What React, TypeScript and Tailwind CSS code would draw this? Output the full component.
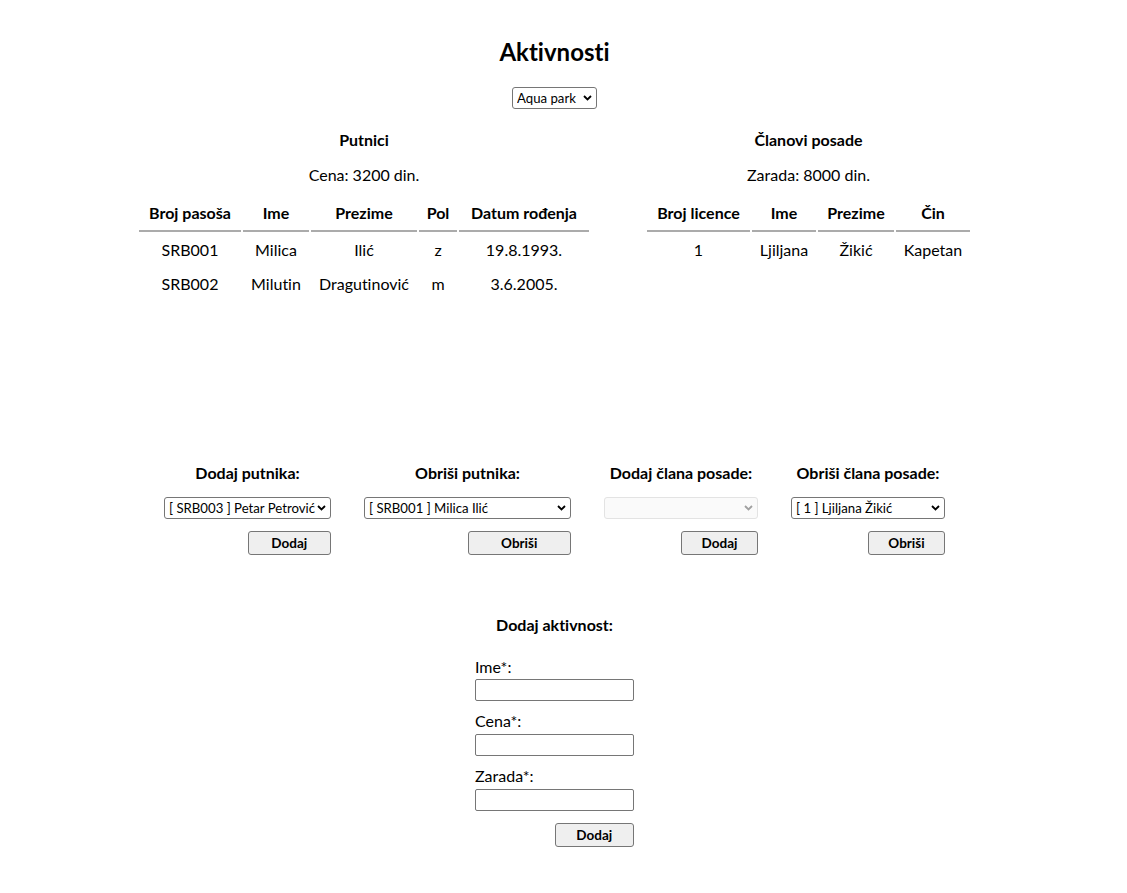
import React from 'react';

const font = { fontFamily: 'Lato, "Noto Sans", Arial, sans-serif' };

const Chevron: React.FC<{ disabled?: boolean }> = ({ disabled }) => (
  <svg
    className="pointer-events-none absolute right-[5px] top-1/2 -translate-y-1/2"
    width="9"
    height="6"
    viewBox="0 0 9 6"
  >
    <path
      d="M1 1 L4.5 4.5 L8 1"
      fill="none"
      stroke={disabled ? '#a0a0a0' : '#000'}
      strokeWidth="1.8"
    />
  </svg>
);

interface SelectProps {
  value?: string;
  className?: string;
  disabled?: boolean;
}

const Select: React.FC<SelectProps> = ({ value = '', className = '', disabled }) => (
  <div className={`relative ${className}`}>
    <select
      disabled={disabled}
      defaultValue={value}
      className={`block h-[22px] w-full appearance-none rounded-[3px] border pl-[4px] pr-[14px] text-[13.2px] leading-[20px] ${
        disabled ? 'border-[#e3e3e3] bg-[#fafafa]' : 'border-[#767676] bg-white text-black'
      }`}
    >
      <option value={value}>{value}</option>
    </select>
    <Chevron disabled={disabled} />
  </div>
);

const Button: React.FC<{ label: string; className?: string }> = ({ label, className = '' }) => (
  <button
    className={`h-[24px] rounded-[3px] border border-[#767676] bg-[#efefef] text-[13.5px] font-bold text-black ${className}`}
  >
    {label}
  </button>
);

const Th: React.FC<{ w: string; children: React.ReactNode }> = ({ w, children }) => (
  <th className={`${w} whitespace-nowrap border-b-2 border-[#ababab] px-0 py-[6px] text-center text-[16px] font-bold leading-[22px]`}>
    {children}
  </th>
);

const Td: React.FC<{ children: React.ReactNode }> = ({ children }) => (
  <td className="py-[5px] text-center text-[16px] leading-[22px]">{children}</td>
);

const passengers = [
  ['SRB001', 'Milica', 'Ilić', 'z', '19.8.1993.'],
  ['SRB002', 'Milutin', 'Dragutinović', 'm', '3.6.2005.'],
];

const FormColumn: React.FC<{ title: string; value: string; width: string; btn: string; disabled?: boolean }> = ({
  title,
  value,
  width,
  btn,
  disabled,
}) => (
  <div className={`flex flex-col ${width}`}>
    <h4 className="whitespace-nowrap text-center text-[16px] font-bold leading-[22px]">{title}</h4>
    <Select value={value} disabled={disabled} className="mt-[13px] w-full" />
    <Button label={btn} className="mt-[12px] w-1/2 self-end" />
  </div>
);

export default function App() {
  return (
    <div
      className="min-h-[893px] w-[1109px] bg-white pb-[40px] pt-[36px] text-black [font-variant-ligatures:none]"
      style={font}
    >
      <h1 className="text-center text-[24px] font-bold leading-[32px]">Aktivnosti</h1>
      <div className="mt-[19px] flex justify-center">
        <Select value="Aqua park" className="w-[85px]" />
      </div>

      <div className="mt-[20px] flex justify-center gap-[54px]">
        <section className="flex flex-col items-center">
          <h3 className="text-[16px] font-bold leading-[22px]">Putnici</h3>
          <p className="mt-[13px] text-[16px] leading-[22px]">Cena: 3200 din.</p>
          <table className="mt-[8px] border-separate border-spacing-[2px]">
            <thead>
              <tr>
                <Th w="w-[102px]">Broj pasoša</Th>
                <Th w="w-[66px]">Ime</Th>
                <Th w="w-[106px]">Prezime</Th>
                <Th w="w-[38px]">Pol</Th>
                <Th w="w-[130px]">Datum rođenja</Th>
              </tr>
            </thead>
            <tbody>
              {passengers.map((p) => (
                <tr key={p[0]}>
                  {p.map((c, i) => (
                    <Td key={i}>{c}</Td>
                  ))}
                </tr>
              ))}
            </tbody>
          </table>
        </section>

        <section className="flex flex-col items-center">
          <h3 className="text-[16px] font-bold leading-[22px]">Članovi posade</h3>
          <p className="mt-[13px] text-[16px] leading-[22px]">Zarada: 8000 din.</p>
          <table className="mt-[8px] border-separate border-spacing-[2px]">
            <thead>
              <tr>
                <Th w="w-[103px]">Broj licence</Th>
                <Th w="w-[64px]">Ime</Th>
                <Th w="w-[76px]">Prezime</Th>
                <Th w="w-[74px]">Čin</Th>
              </tr>
            </thead>
            <tbody>
              <tr>
                <Td>1</Td>
                <Td>Ljiljana</Td>
                <Td>Žikić</Td>
                <Td>Kapetan</Td>
              </tr>
            </tbody>
          </table>
        </section>
      </div>

      <div className="mt-[160px] flex justify-center gap-[33px]">
        <FormColumn title="Dodaj putnika:" value="[ SRB003 ] Petar Petrović" width="w-[167px]" btn="Dodaj" />
        <FormColumn title="Obriši putnika:" value="[ SRB001 ] Milica Ilić" width="w-[207px]" btn="Obriši" />
        <FormColumn title="Dodaj člana posade:" value="" width="w-[154px]" btn="Dodaj" disabled />
        <FormColumn title="Obriši člana posade:" value="[ 1 ] Ljiljana Žikić" width="w-[154px]" btn="Obriši" />
      </div>

      <div className="mt-[59px] flex flex-col items-center">
        <h4 className="text-[16px] font-bold leading-[22px]">Dodaj aktivnost:</h4>
        <form className="mt-[20px] flex w-[159px] flex-col">
          <label className="text-[16px] leading-[22px]">Ime*:</label>
          <input className="mt-[1px] h-[22px] rounded-[2px] border border-[#767676] bg-white" />
          <label className="mt-[9px] text-[16px] leading-[22px]">Cena*:</label>
          <input className="mt-[2px] h-[22px] rounded-[2px] border border-[#767676] bg-white" />
          <label className="mt-[9px] text-[16px] leading-[22px]">Zarada*:</label>
          <input className="mt-[2px] h-[22px] rounded-[2px] border border-[#767676] bg-white" />
          <Button label="Dodaj" className="mt-[12px] w-1/2 self-end" />
        </form>
      </div>
    </div>
  );
}
